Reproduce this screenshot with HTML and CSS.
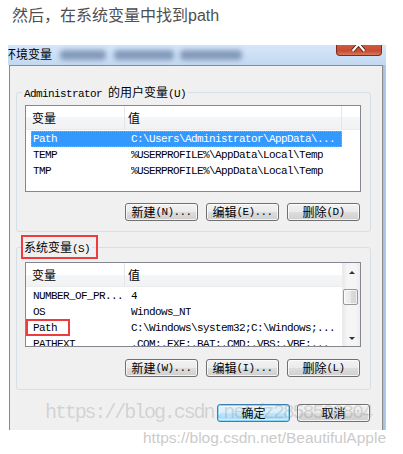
FILE: index.html
```html
<!DOCTYPE html>
<html lang="zh-CN">
<head>
<meta charset="utf-8">
<title>环境变量</title>
<link rel="stylesheet" href="styles.css">
</head>
<body>
<div class="page">
  <p class="caption">然后，在系统变量中找到path</p>
  <div class="window">
    <div class="titlebar">
      <span class="wtitle">环境变量</span>
      <span class="blur b1"></span><span class="blur b2"></span><span class="blur b3"></span>
      <span class="close">
        <svg width="46" height="11" viewBox="0 0 46 11">
          <path d="M17 6 L23 -1 L29 6" fill="none" stroke="#5a2010" stroke-width="4" stroke-linejoin="round"/>
          <path d="M17 6 L23 -1 L29 6" fill="none" stroke="#ffffff" stroke-width="2.2" stroke-linejoin="round"/>
        </svg>
      </span>
    </div>
    <div class="frame">
      <div class="client ui">
        <fieldset class="group g1">
          <legend class="lgd"><span class="lg">Administrator <span class="cj">的用户变量</span>(U)</span></legend>
          <div class="list l1">
            <div class="lmain">
              <div class="lhead"><span class="h1 cj">变量</span><span class="h2 cj">值</span><span class="h3"></span></div>
              <div class="rows">
                <div class="row sel"><span class="r1">Path</span><span class="r2">C:\Users\Administrator\AppData\...</span></div>
                <div class="row"><span class="r1">TEMP</span><span class="r2">%USERPROFILE%\AppData\Local\Temp</span></div>
                <div class="row"><span class="r1">TMP</span><span class="r2">%USERPROFILE%\AppData\Local\Temp</span></div>
              </div>
            </div>
          </div>
          <div class="btns">
            <button class="btn"><span class="cj">新建</span>(N)...</button>
            <button class="btn"><span class="cj">编辑</span>(E)...</button>
            <button class="btn"><span class="cj">删除</span>(D)</button>
          </div>
        </fieldset>

        <fieldset class="group g2">
          <legend class="lgd"><span class="lg"><span class="cj">系统变量</span>(S)<span class="mark mark-legend"></span></span></legend>
          <div class="list l2">
            <div class="lmain">
              <div class="lhead"><span class="h1 cj">变量</span><span class="h2 cj">值</span></div>
              <div class="rows">
                <div class="row"><span class="r1">NUMBER_OF_PR...</span><span class="r2">4</span></div>
                <div class="row"><span class="r1">OS</span><span class="r2">Windows_NT</span></div>
                <div class="row"><span class="r1">Path</span><span class="r2">C:\Windows\system32;C:\Windows;...</span><span class="mark mark-path"></span></div>
                <div class="row"><span class="r1">PATHEXT</span><span class="r2">.COM;.EXE;.BAT;.CMD;.VBS;.VBE;...</span></div>
              </div>
            </div>
            <div class="sb">
              <div class="sbtn"><span class="arr up"></span></div>
              <div class="track"><div class="thumb"></div></div>
              <div class="sbtn"><span class="arr down"></span></div>
            </div>
          </div>
          <div class="btns">
            <button class="btn"><span class="cj">新建</span>(W)...</button>
            <button class="btn"><span class="cj">编辑</span>(I)...</button>
            <button class="btn"><span class="cj">删除</span>(L)</button>
          </div>
        </fieldset>

        <div class="dlgbtns">
          <button class="btn ok"><span class="cj">确定</span></button>
          <button class="btn"><span class="cj">取消</span></button>
        </div>
      </div>
      <div class="edge"></div>
    </div>
  </div>
  <div class="wm1">https://blog.csdn.net/z2858508804</div>
  <div class="wm2">https://blog.csdn.net/BeautifulApple</div>
</div>
</body>
</html>
```

FILE: styles.css
```css
* { box-sizing: border-box; }
html, body { margin: 0; background: #fff; }

.page {
  position: relative;
  width: 403px;
  height: 454px;
  overflow: hidden;
}

.caption {
  margin: 0;
  height: 45px;
  padding: 6px 0 0 12px;
  font: 16px/20px "Liberation Sans", "Noto Sans CJK SC", sans-serif;
  color: #4f4f4f;
}

.window {
  margin-left: 8px;
  width: 378px;
}

.titlebar {
  height: 20px;
  display: flex;
  align-items: flex-start;
  overflow: hidden;
  background: linear-gradient(#d5e6f8, #c3d9f1);
}

.wtitle {
  margin: 2px 0 0 -4px;
  font: 12px/14px "Noto Sans CJK SC", sans-serif;
  color: #000;
  white-space: nowrap;
}

.blur {
  height: 10px;
  margin-top: 5px;
  background: rgba(60, 85, 130, 0.5);
  filter: blur(2.5px);
  border-radius: 4px;
  flex: none;
}
.b1 { width: 46px; margin-left: 8px; }
.b2 { width: 60px; margin-left: 8px; }
.b3 { width: 62px; margin-left: 6px; }

.close {
  margin-left: auto;
  margin-right: 4px;
  width: 46px;
  height: 11px;
  flex: none;
  border: 1px solid #7d2b1a;
  border-top: 0;
  border-radius: 0 0 4px 4px;
  background: linear-gradient(#cf5a40, #c94a31 60%, #d77a5f);
  overflow: hidden;
  display: flex;
}
.close svg { display: block; margin-left: -1px; }

.frame {
  display: flex;
  padding-left: 1px;
}

.client {
  width: 374px;
  height: 365px;
  background: #f0f0f0;
  border: 1px solid #8b8b8b;
  border-bottom: 0;
  padding: 0 11px 0 6px;
  display: flex;
  flex-direction: column;
}

.edge {
  width: 3px;
  height: 365px;
  background: linear-gradient(90deg, #9dbde2, #b7cfea);
}

.ui {
  font-family: "Liberation Mono", monospace;
  font-size: 11px;
  letter-spacing: -0.6px;
  color: #000;
}
.cj {
  font-family: "Noto Sans CJK SC", sans-serif;
  font-size: 12px;
  letter-spacing: 0;
}

.group {
  margin: 17px 0 0;
  padding: 4px 9px 10px 8px;
  border: 1px solid #d5dfe5;
  border-radius: 3px;
  min-width: 0;
}
.g2 {
  margin-top: 6px;
  padding: 6px 9px 12px 8px;
}

.lgd {
  padding: 0 2px;
  margin-left: -3px;
  height: 18px;
  line-height: 18px;
  font-size: 11px;
}
.lg {
  position: relative;
  display: inline-block;
  height: 18px;
  line-height: 18px;
  white-space: nowrap;
  vertical-align: top;
}

.mark {
  position: absolute;
  border: 2px solid #ee3b3b;
}
.mark-legend {
  left: -3px;
  top: -3px;
  width: 77px;
  height: 24px;
}
.mark-path {
  left: -5px;
  top: -1px;
  width: 44px;
  height: 17px;
}

.list {
  height: 87px;
  border: 1px solid #828790;
  background: #fff;
  display: flex;
  overflow: hidden;
}
.l2 { height: 85px; }

.lmain {
  flex: 1;
  min-width: 0;
}

.lhead {
  display: flex;
  height: 24px;
  border-bottom: 1px solid #ececec;
  background: linear-gradient(#ffffff 0, #ffffff 50%, #f5f6f7 50%, #f1f2f3 100%);
  line-height: 23px;
}
.h1 {
  width: 99px;
  padding-left: 6px;
  border-right: 1px solid #e3e5e8;
}
.h2 {
  width: 217px;
  padding-left: 3px;
  border-right: 1px solid #e3e5e8;
}
.h3 { flex: 1; }
.l2 .h2 { border-right: 0; }

.rows { padding-top: 1px; }

.row {
  position: relative;
  display: flex;
  height: 16px;
  line-height: 16px;
  margin-left: 5px;
  width: 311px;
  white-space: nowrap;
}
.r1 {
  width: 100px;
  padding-left: 2px;
  flex: none;
}
.r2 { overflow: hidden; }
.sel {
  background: #3399ff;
  color: #fff;
  outline: 1px dotted #e59b3c;
  outline-offset: -1px;
}

.sb {
  width: 18px;
  flex: none;
  display: flex;
  flex-direction: column;
  border-left: 1px solid #ececec;
  background: linear-gradient(90deg, #e9e9e9, #f5f5f5 25%, #f5f5f5 75%, #ececec);
}
.sbtn {
  height: 17px;
  display: flex;
  align-items: center;
  justify-content: center;
  flex: none;
}
.arr {
  width: 0;
  height: 0;
  border-left: 3px solid transparent;
  border-right: 3px solid transparent;
}
.arr.up { border-bottom: 3px solid #333; margin-top: 1px; }
.arr.down { border-top: 3px solid #333; margin-top: 1px; }
.track { flex: 1; padding-top: 9px; }
.thumb {
  width: 15px;
  height: 16px;
  margin-left: 0;
  border: 1px solid #979797;
  border-radius: 2px;
  background: linear-gradient(90deg, #f4f4f4, #e8e8e8 50%, #dcdcdc 51%, #d4d4d4);
  box-shadow: inset 0 0 0 1px rgba(255, 255, 255, 0.7);
}

.btns {
  display: flex;
  justify-content: flex-end;
  gap: 8px;
  margin-top: 11px;
  margin-right: 1px;
}
.g2 .btns { margin-top: 12px; }

.btn {
  appearance: none;
  width: 73px;
  height: 18px;
  padding: 0;
  margin: 0;
  font: inherit;
  letter-spacing: inherit;
  line-height: 16px;
  color: #000;
  border: 1px solid #707070;
  border-radius: 3px;
  background: linear-gradient(#f2f2f2 0%, #ebebeb 48%, #dddddd 52%, #cfcfcf 100%);
  box-shadow: inset 0 0 0 1px rgba(255, 255, 255, 0.75);
  display: flex;
  align-items: center;
  justify-content: center;
  white-space: nowrap;
}

.dlgbtns {
  display: flex;
  justify-content: flex-end;
  gap: 7px;
  margin-top: 14px;
  margin-right: 1px;
}
.ok {
  border-color: #3c7fb1;
  background: linear-gradient(#e5f4fc 0%, #d7eefb 48%, #bee6fd 52%, #a7d9f5 100%);
  box-shadow: inset 0 0 0 1px #8fd3f5, inset 0 0 0 2px rgba(255, 255, 255, 0.5);
}

.wm1 {
  position: absolute;
  left: 45px;
  top: 401px;
  font: 20px/24px "Liberation Mono", monospace;
  letter-spacing: -2.1px;
  color: rgba(120, 120, 120, 0.26);
  white-space: nowrap;
}
.wm2 {
  position: absolute;
  left: 143px;
  top: 429px;
  font: 15.5px/18px "Liberation Sans", sans-serif;
  color: #cbcbcb;
  white-space: nowrap;
}
```
